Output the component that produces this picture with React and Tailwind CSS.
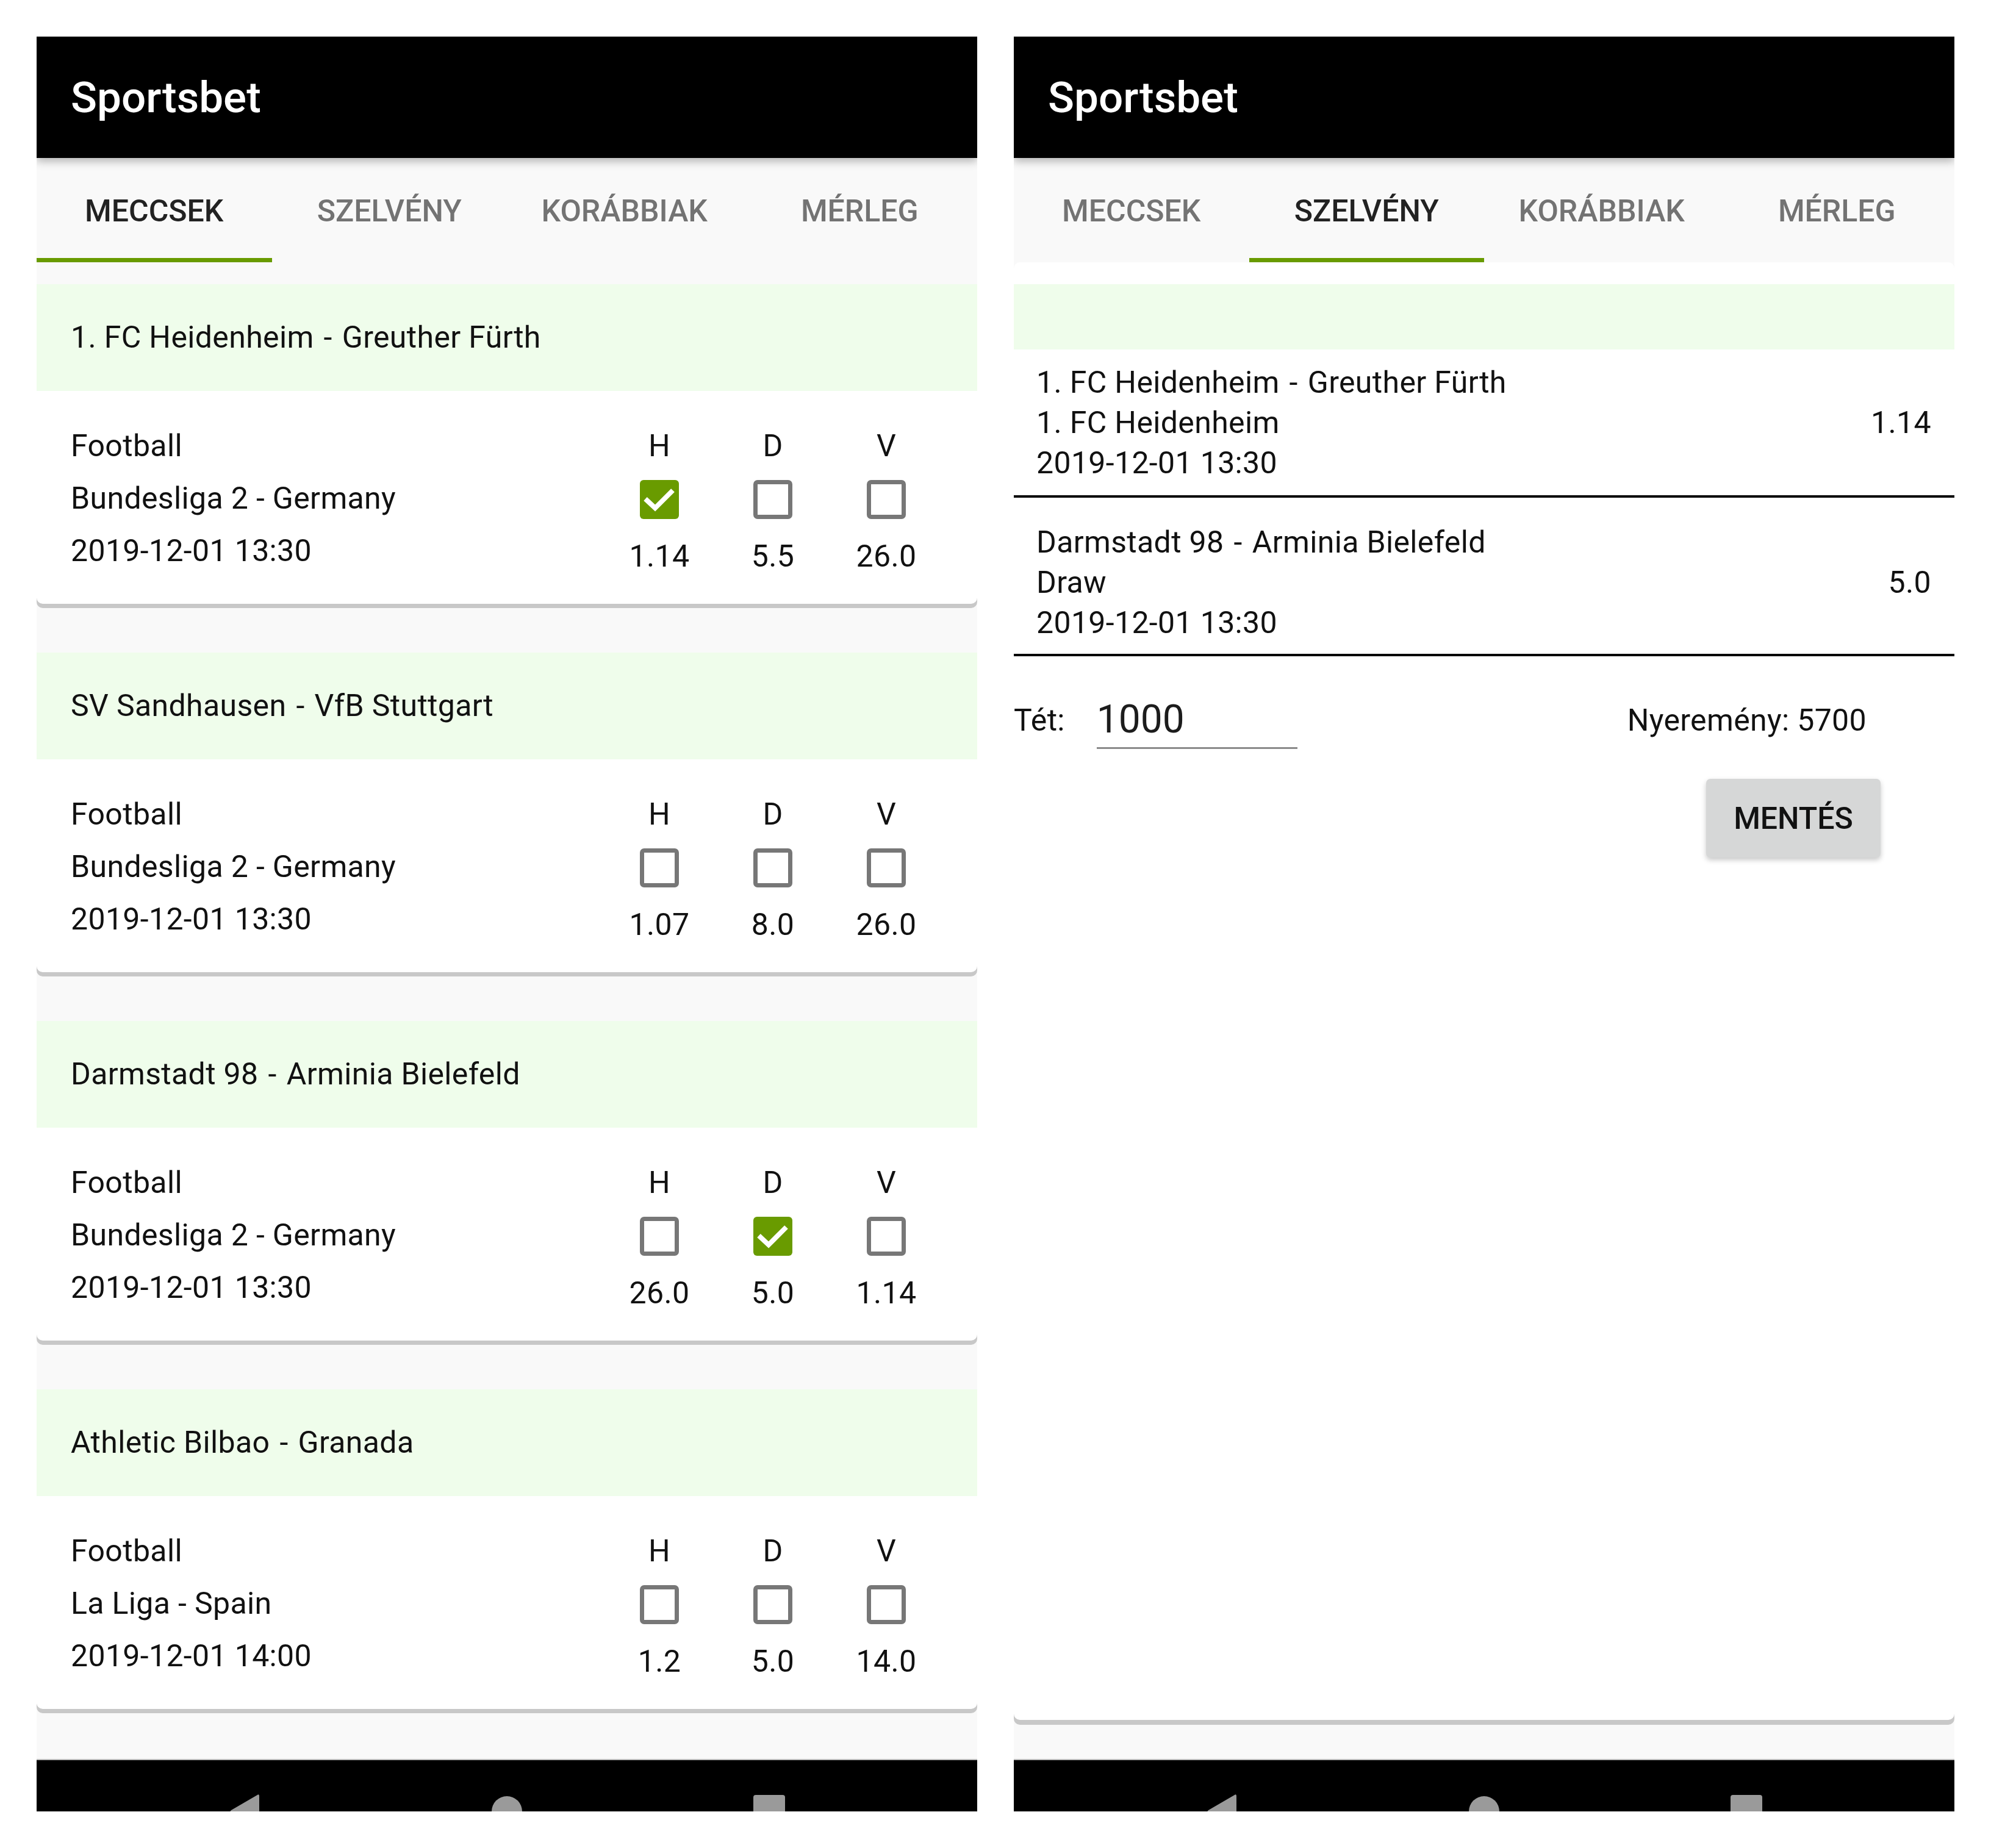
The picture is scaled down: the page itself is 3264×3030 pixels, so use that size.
import React from "react";

const matches = [
  { home: "1. FC Heidenheim", away: "Greuther Fürth", league: "Bundesliga 2 - Germany", date: "2019-12-01 13:30", odds: ["1.14", "5.5", "26.0"], checked: 0 },
  { home: "SV Sandhausen", away: "VfB Stuttgart", league: "Bundesliga 2 - Germany", date: "2019-12-01 13:30", odds: ["1.07", "8.0", "26.0"], checked: -1 },
  { home: "Darmstadt 98", away: "Arminia Bielefeld", league: "Bundesliga 2 - Germany", date: "2019-12-01 13:30", odds: ["26.0", "5.0", "1.14"], checked: 1 },
  { home: "Athletic Bilbao", away: "Granada", league: "La Liga - Spain", date: "2019-12-01 14:00", odds: ["1.2", "5.0", "14.0"], checked: -1 },
];

const slip = [
  { home: "1. FC Heidenheim", away: "Greuther Fürth", pick: "1. FC Heidenheim", odd: "1.14", date: "2019-12-01 13:30", pt: "pt-[21px]", pb: "pb-[20px]" },
  { home: "Darmstadt 98", away: "Arminia Bielefeld", pick: "Draw", odd: "5.0", date: "2019-12-01 13:30", pt: "pt-[40px]", pb: "pb-[18px]" },
];

function Header() {
  return (
    <div className="relative z-10 h-[199px] shrink-0 bg-black flex items-center pl-[56px] shadow-[0_5px_14px_rgba(0,0,0,0.3)]">
      <span className="text-white text-[71px] font-medium leading-none">Sportsbet</span>
    </div>
  );
}

function Tabs({ active }) {
  const tabs = ["MECCSEK", "SZELVÉNY", "KORÁBBIAK", "MÉRLEG"];
  return (
    <div className="h-[171px] shrink-0 bg-[#f9f9f9] flex">
      {tabs.map((t, i) => (
        <div key={t} className="flex-1 flex flex-col">
          <div className="flex-1 flex items-center justify-center pt-[10px]">
            <span className={i === active ? "text-[50px] font-medium leading-none text-[#222222]" : "text-[50px] font-medium leading-none text-[#737373]"}>
              {t}
            </span>
          </div>
          <div className={i === active ? "h-[7px] bg-[#699b00]" : "h-[7px]"} />
        </div>
      ))}
    </div>
  );
}

function Checkbox({ checked }) {
  if (checked) {
    return (
      <div className="w-[64px] h-[64px] rounded-[6px] bg-[#699b00]">
        <svg width="64" height="64" viewBox="0 0 64 64">
          <polyline points="9,31 25,46 54,17" fill="none" stroke="#ffffff" strokeWidth="8" />
        </svg>
      </div>
    );
  }
  return <div className="w-[64px] h-[64px] rounded-[7px] border-[7px] border-[#777777]" />;
}

function MatchCard({ m }) {
  return (
    <div className="mb-[80px]">
      <div className="h-[175px] bg-[#effdeb] flex items-center pl-[56px] text-[50px] tracking-[0.35px] text-[#111]">
        <span>{m.home}</span>
        <span className="mx-[16px]">-</span>
        <span>{m.away}</span>
      </div>
      <div className="h-[349px] bg-white rounded-b-[10px] shadow-[0_7px_0_#c8c8c8] flex pl-[56px] pr-[56px] pt-[47px] text-[50px] tracking-[0.35px] text-[#111]">
        <div className="flex-1 leading-[86px]">
          <div>Football</div>
          <div>{m.league}</div>
          <div>{m.date}</div>
        </div>
        {["H", "D", "V"].map((l, i) => (
          <div key={l} className="w-[186px] flex flex-col items-center">
            <div className="h-[86px] leading-[86px]">{l}</div>
            <div className="mt-[13px]">
              <Checkbox checked={m.checked === i} />
            </div>
            <div className="mt-[18px] leading-[86px]">{m.odds[i]}</div>
          </div>
        ))}
      </div>
    </div>
  );
}

function NavBar() {
  return (
    <div className="h-[86px] shrink-0 bg-black border-t-[2px] border-[#bdbdbd] overflow-hidden flex justify-center gap-[330px] items-start">
      <div className="w-[100px] flex justify-center mt-[55px]">
        <svg width="50" height="58" viewBox="0 0 50 58">
          <path d="M46 2 Q49 0 49 4 L49 54 Q49 58 46 56 L3 31 Q0 29 3 27 Z" fill="#9a9a9a" />
        </svg>
      </div>
      <div className="w-[100px] flex justify-center mt-[59px]">
        <div className="w-[50px] h-[50px] rounded-full bg-[#9a9a9a]" />
      </div>
      <div className="w-[100px] flex justify-center mt-[57px]">
        <div className="w-[52px] h-[52px] rounded-[4px] bg-[#9a9a9a]" />
      </div>
    </div>
  );
}

function LeftPanel() {
  return (
    <div className="w-[1542px] h-[2910px] flex flex-col overflow-hidden">
      <Header />
      <Tabs active={0} />
      <div className="flex-1 bg-[#f9f9f9] overflow-hidden pt-[36px]">
        {matches.map((m) => (
          <MatchCard key={m.home} m={m} />
        ))}
      </div>
      <NavBar />
    </div>
  );
}

function RightPanel() {
  return (
    <div className="w-[1542px] h-[2910px] flex flex-col overflow-hidden">
      <Header />
      <Tabs active={1} />
      <div className="flex-1 bg-[#f9f9f9] overflow-hidden">
        <div className="h-[2390px] bg-white rounded-[10px] shadow-[0_8px_0_#c8c8c8] pt-[36px] text-[50px] tracking-[0.35px] text-[#111]">
          <div className="h-[107px] bg-[#effdeb]" />
          {slip.map((s) => (
            <div key={s.home}>
              <div className={`flex items-center pl-[37px] pr-[38px] ${s.pt} ${s.pb}`}>
                <div className="flex-1 leading-[66px]">
                  <div>
                    <span>{s.home}</span>
                    <span className="mx-[16px]">-</span>
                    <span>{s.away}</span>
                  </div>
                  <div>{s.pick}</div>
                  <div>{s.date}</div>
                </div>
                <div className="leading-[66px]">{s.odd}</div>
              </div>
              <div className="h-[4px] bg-black" />
            </div>
          ))}
          <div className="flex items-center mt-[58px]">
            <span className="leading-none">Tét:</span>
            <div className="ml-[52px] w-[329px] h-[94px] border-b-[3px] border-[#8a8a8a] flex items-center">
              <span className="text-[64px] tracking-normal leading-[86px] text-[#1c1c1c]">1000</span>
            </div>
            <span className="ml-auto mr-[144px] leading-none">Nyeremény: 5700</span>
          </div>
          <div className="flex justify-end pr-[121px] mt-[49px]">
            <div className="w-[286px] h-[129px] rounded-[7px] bg-[#d6d7d7] shadow-[0_4px_8px_rgba(0,0,0,0.22)] flex items-center justify-center">
              <span className="text-[50px] font-medium leading-none tracking-normal text-[#111]">MENTÉS</span>
            </div>
          </div>
        </div>
      </div>
      <NavBar />
    </div>
  );
}

export default function App() {
  return (
    <div className="w-[3264px] h-[3030px] bg-white flex gap-[60px] px-[60px] pt-[60px] font-['Roboto',sans-serif] overflow-hidden">
      <LeftPanel />
      <RightPanel />
    </div>
  );
}
